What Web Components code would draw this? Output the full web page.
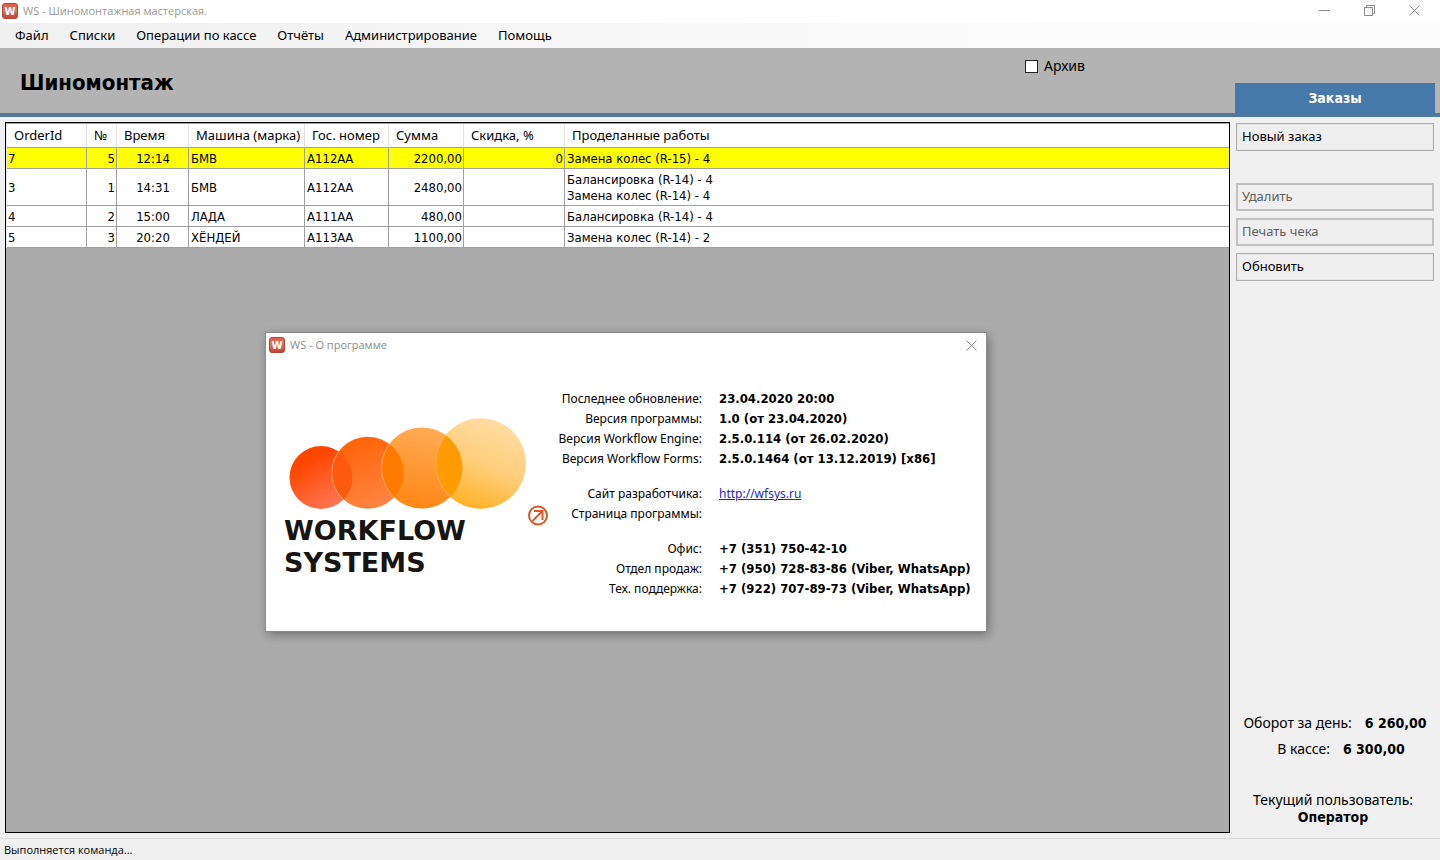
<!DOCTYPE html>
<html lang="ru">
<head>
<meta charset="utf-8">
<title>WS - Шиномонтажная мастерская.</title>
<style>
  :root {
    --ui: "Noto Sans", "Open Sans", sans-serif;
    --grid: "DejaVu Sans Condensed", "DejaVu Sans", sans-serif;
    --caption: "Open Sans", "Noto Sans", sans-serif;
    --accent: #4678aa;
  }
  body { margin: 0; font: 13px/16px var(--ui); color: #000; background: #f0f0f0; }
</style>
</head>
<body>
<ws-app></ws-app>

<script>
const define = (name, html, setup) => {
  const template = document.createElement('template');
  template.innerHTML = html;
  customElements.define(name, class extends HTMLElement {
    constructor() {
      super();
      this.attachShadow({ mode: 'open' }).append(template.content.cloneNode(true));
    }
    connectedCallback() { if (setup) setup(this, this.shadowRoot); }
  });
};

define('ws-icon', `
<style>:host{display:block;width:16px;height:16px}svg{display:block}</style>
<svg width="16" height="16" viewBox="0 0 16 16" aria-hidden="true">
  <defs><linearGradient id="g" x1="0" y1="0" x2="0" y2="1"><stop offset="0" stop-color="#e0604c"/><stop offset=".5" stop-color="#d9705f"/><stop offset="1" stop-color="#c3402f"/></linearGradient></defs>
  <rect x=".5" y=".5" width="15" height="15" rx="2.5" fill="url(#g)" stroke="#b5473a"/>
  <text x="8" y="12" text-anchor="middle" font-family="DejaVu Sans, sans-serif" font-weight="bold" font-size="10" fill="#fff">W</text>
</svg>`);

define('ws-window-button', `
<style>
  :host{display:block}
  button{display:grid;place-items:center;width:100%;height:100%;border:0;padding:0;background:none}
  svg{display:block;fill:none;stroke:#8c8c8c}
  svg *{display:none}
  :host([kind=min]) .min,:host([kind=restore]) .restore,:host([kind=close]) .close{display:block}
</style>
<button><svg width="11" height="11" viewBox="0 0 11 11">
  <path class="min" d="M0 5.5h11"/>
  <path class="restore" d="M.5 2.5h8v8h-8zM2.5 2.5v-2h8v8h-2"/>
  <path class="close" d="M.5.5l10 10M10.500.5l-10 10"/>
</svg></button>`, (el, root) => {
  root.querySelector('button').setAttribute('aria-label', el.getAttribute('label'));
});

define('ws-titlebar', `
<style>
  :host{display:flex;align-items:center;height:23px;box-sizing:border-box;background:#fff;padding:0 3px 1px 2px;
        font:11px/16px var(--caption);color:#999}
  .name{flex:1;margin-left:5px}
  ws-window-button{width:45px;height:21px;align-self:flex-start}
</style>
<ws-icon></ws-icon><span class="name"><slot></slot></span>
<ws-window-button kind="min" label="Свернуть"></ws-window-button>
<ws-window-button kind="restore" label="Восстановить"></ws-window-button>
<ws-window-button kind="close" label="Закрыть"></ws-window-button>`);

define('ws-menu', `
<style>
  :host{display:block;background:linear-gradient(90deg,#f0f0f0,#fafafa 60%,#fcfcfc)}
  nav{display:flex;gap:1px;height:25px;padding:0 5px}
  button{border:0;background:none;padding:0 10px 2px;font:13px/16px var(--ui);color:#000}
</style>
<nav><button>Файл</button><button>Списки</button><button>Операции по кассе</button><button>Отчёты</button><button>Администрирование</button><button>Помощь</button></nav>`);

define('ws-header', `
<style>
  :host{display:flex;height:65px;background:#b3b3b3;border-bottom:4px solid #4f7899;padding:0 5px 0 20px}
  h1{flex:1;margin:0;align-self:center;font:bold 22px/28px var(--grid);padding-top:4px}
  label{display:flex;align-items:center;gap:6px;height:16px;width:210px;margin-top:10px;font-size:14px}
  input{appearance:none;width:13px;height:13px;margin:0;border:1px solid #222;background:#fff}
  .tab{align-self:flex-end;width:200px;height:30px;border:0;background:var(--accent);color:#fff;font:bold 14px/16px var(--grid)}
</style>
<h1>Шиномонтаж</h1>
<label><input type="checkbox">Архив</label>
<button class="tab">Заказы</button>`);

define('ws-orders', `
<style>
  :host{display:block;border:1px solid #000;background:#ababab;box-sizing:border-box}
  table{width:100%;table-layout:fixed;border-collapse:separate;border-spacing:0;background:#fff;
        border-top:1px solid #a0a0a0;border-left:1px solid #e8e8f0;font:13px/16px var(--grid)}
  th{height:22px;padding:0 0 1px 7px;text-align:left;font:13px/16px var(--ui);white-space:nowrap;
     border-right:1px solid #e2e2e2;border-bottom:1px solid #a0a0a0}
  td{height:16px;padding:3px 1px 1px 2px;border-right:1px solid #a0a0a0;border-bottom:1px solid #a0a0a0;white-space:pre-line}
  td:first-child{padding-left:1px}
  th:last-child,td:last-child{border-right:0}
  td.num{text-align:right}
  td.time{text-align:center}
  tr.current{background:#ff0}
  .c1{width:80px}.c2{width:30px}.c3{width:72px}.c4{width:116px}.c5{width:84px}.c6{width:75px}.c7{width:101px}
</style>
<table>
  <colgroup><col class="c1"><col class="c2"><col class="c3"><col class="c4"><col class="c5"><col class="c6"><col class="c7"><col></colgroup>
  <thead><tr><th>OrderId</th><th>№</th><th>Время</th><th>Машина (марка)</th><th>Гос. номер</th><th>Сумма</th><th>Скидка, %</th><th>Проделанные работы</th></tr></thead>
  <tbody></tbody>
</table>`, (el, root) => {
  const orders = [
    ['7', '5', '12:14', 'БМВ', 'А112АА', '2200,00', '0', 'Замена колес (R-15) - 4'],
    ['3', '1', '14:31', 'БМВ', 'А112АА', '2480,00', '', 'Балансировка (R-14) - 4\nЗамена колес (R-14) - 4'],
    ['4', '2', '15:00', 'ЛАДА', 'А111АА', '480,00', '', 'Балансировка (R-14) - 4'],
    ['5', '3', '20:20', 'ХЁНДЕЙ', 'А113АА', '1100,00', '', 'Замена колес (R-14) - 2']
  ];
  const kinds = ['', 'num', 'time', '', '', 'num', 'num', ''];
  const body = root.querySelector('tbody');
  orders.forEach((order, i) => {
    const row = body.insertRow();
    if (i === 0) row.className = 'current';
    order.forEach((text, c) => {
      const cell = row.insertCell();
      cell.className = kinds[c];
      cell.textContent = text;
    });
  });
});

define('ws-action', `
<style>
  :host{display:block}
  button{display:block;width:100%;height:28px;padding:0 5px 2px;text-align:left;border:1px solid #adadad;
         box-shadow:inset 0 0 0 1px #e6e6e6;background:#efefef;font:13px/16px var(--ui);color:#000}
  button:disabled{padding:0 4px 2px;border:2px solid #c1c1c1;box-shadow:none;color:#606060}
</style>
<button><slot></slot></button>`, (el, root) => {
  root.querySelector('button').disabled = el.hasAttribute('disabled');
});

define('ws-sidebar', `
<style>
  :host{display:flex;flex-direction:column;width:198px;font:14px/17px var(--grid)}
  .actions{display:grid;gap:7px}
  .actions :first-child{margin-bottom:25px}
  dl{margin:auto 0 0;display:grid;gap:8px}
  dl div{display:flex;justify-content:center;align-items:baseline;gap:13px}
  dl div + div{padding-left:12px}
  dt{font-family:var(--ui)}
  dd{margin:0;font-weight:bold}
  .user{margin:33px 4px 7px 0;text-align:center}
  .user span{font-family:var(--ui)}
  b{display:block}
</style>
<div class="actions">
  <ws-action>Новый заказ</ws-action>
  <ws-action disabled>Удалить</ws-action>
  <ws-action disabled>Печать чека</ws-action>
  <ws-action>Обновить</ws-action>
</div>
<dl><div><dt>Оборот за день:</dt><dd>6 260,00</dd></div><div><dt>В кассе:</dt><dd>6 300,00</dd></div></dl>
<div class="user"><span>Текущий пользователь:</span><b>Оператор</b></div>`);

define('ws-logo', `
<style>:host{display:block}svg{display:block}</style>
<svg width="266" height="164" viewBox="0 0 266 164" role="img" aria-label="Workflow Systems">
  <defs>
    <linearGradient id="a" x1=".2" y1="0" x2=".8" y2="1"><stop offset=".2" stop-color="#ff4500"/><stop offset="1" stop-color="#ff7b5c"/></linearGradient>
    <linearGradient id="b" x1=".3" y1="0" x2=".7" y2="1"><stop offset="0" stop-color="#ff6204"/><stop offset="1" stop-color="#ff8646"/></linearGradient>
    <linearGradient id="c" x1=".6" y1="0" x2=".4" y2="1"><stop offset="0" stop-color="#ffab55"/><stop offset="1" stop-color="#ff8614"/></linearGradient>
    <linearGradient id="d" x1=".7" y1="0" x2=".3" y2="1"><stop offset="0" stop-color="#ffdda6"/><stop offset=".5" stop-color="#ffce7c"/><stop offset="1" stop-color="#ffb020"/></linearGradient>
    <clipPath id="k1"><circle cx="37" cy="59.500" r="31.500"/></clipPath>
    <clipPath id="k2"><circle cx="83.700" cy="54.800" r="36"/></clipPath>
    <clipPath id="k3"><circle cx="138" cy="50" r="40.500"/></clipPath>
  </defs>
  <circle cx="37" cy="59.500" r="31.500" fill="url(#a)"/>
  <circle cx="83.700" cy="54.800" r="36" fill="url(#b)"/>
  <circle cx="138" cy="50" r="40.500" fill="url(#c)"/>
  <circle cx="196.700" cy="45.500" r="45.200" fill="url(#d)"/>
  <g fill="none" stroke="#ffa868" stroke-width="1">
    <circle cx="83.700" cy="54.800" r="36" fill="#fb5a10" clip-path="url(#k1)"/>
    <circle cx="138" cy="50" r="40.500" fill="#ff7a00" clip-path="url(#k2)"/>
    <circle cx="196.700" cy="45.500" r="45" fill="#ff9c04" clip-path="url(#k3)"/>
  </g>
  <g fill="none" stroke="#d9572b" stroke-width="2">
    <circle cx="254" cy="97.500" r="9"/>
    <path d="M248.500 103l9.500-9.500M250 93h8.500v9"/>
  </g>
  <g font-family="DejaVu Sans, sans-serif" font-weight="bold" font-size="27" fill="#171412">
    <text x="0" y="122">WORKFLOW</text>
    <text x="0" y="154">SYSTEMS</text>
  </g>
</svg>`);

define('ws-about', `
<style>
  :host{display:block;width:720px;background:#fff;box-sizing:border-box;outline:1px solid #8b8b8b;box-shadow:2px 3px 10px rgba(0,0,0,.4)}
  header{display:flex;align-items:center;height:24px;padding:0 3px;font:11px/16px var(--caption);color:#8c8c8c}
  header span{flex:1;margin-left:5px}
  ws-window-button{width:24px;height:24px}
  .body{display:flex;padding:32px 18px}
  ws-logo{margin-top:29px;flex:none}
  dl{flex:1;margin:0;display:grid;grid-template-columns:152px 1fr;column-gap:17px;
     grid-template-rows:repeat(4,20px) 15px repeat(2,20px) 15px repeat(3,20px);line-height:20px}
  dt{text-align:right;white-space:nowrap;font-size:12px}
  dd{margin:0;font:bold 13px/20px var(--grid);white-space:nowrap}
  dd.link{font:12px/20px var(--ui)}
  .gap{grid-column:1/3}
  a{color:#2424d8}
</style>
<header><ws-icon></ws-icon><span>WS - О программе</span><ws-window-button kind="close" label="Закрыть"></ws-window-button></header>
<div class="body">
  <ws-logo></ws-logo>
  <dl>
    <dt>Последнее обновление:</dt><dd>23.04.2020 20:00</dd>
    <dt>Версия программы:</dt><dd>1.0 (от 23.04.2020)</dd>
    <dt>Версия Workflow Engine:</dt><dd>2.5.0.114 (от 26.02.2020)</dd>
    <dt>Версия Workflow Forms:</dt><dd>2.5.0.1464 (от 13.12.2019) [x86]</dd>
    <div class="gap"></div>
    <dt>Сайт разработчика:</dt><dd class="link"><a href="http://wfsys.ru">http://wfsys.ru</a></dd>
    <dt>Страница программы:</dt><dd></dd>
    <div class="gap"></div>
    <dt>Офис:</dt><dd>+7 (351) 750-42-10</dd>
    <dt>Отдел продаж:</dt><dd>+7 (950) 728-83-86 (Viber, WhatsApp)</dd>
    <dt>Тех. поддержка:</dt><dd>+7 (922) 707-89-73 (Viber, WhatsApp)</dd>
  </dl>
</div>`);

define('ws-app', `
<style>
  :host{display:flex;flex-direction:column;min-height:100vh}
  main{position:relative;flex:1;display:flex;gap:6px;padding:5px 6px 5px 5px}
  ws-orders{flex:1}
  ws-sidebar{padding-top:1px}
  ws-about{position:absolute;left:266px;top:216px}
  footer{border-top:1px solid #d7d7d7;padding:3px 4px 2px;font:11px/16px var(--caption)}
</style>
<ws-titlebar>WS - Шиномонтажная мастерская.</ws-titlebar>
<ws-menu></ws-menu>
<ws-header></ws-header>
<main>
  <ws-orders></ws-orders>
  <ws-sidebar></ws-sidebar>
  <ws-about role="dialog" aria-label="О программе"></ws-about>
</main>
<footer>Выполняется команда...</footer>`);
</script>
</body>
</html>
